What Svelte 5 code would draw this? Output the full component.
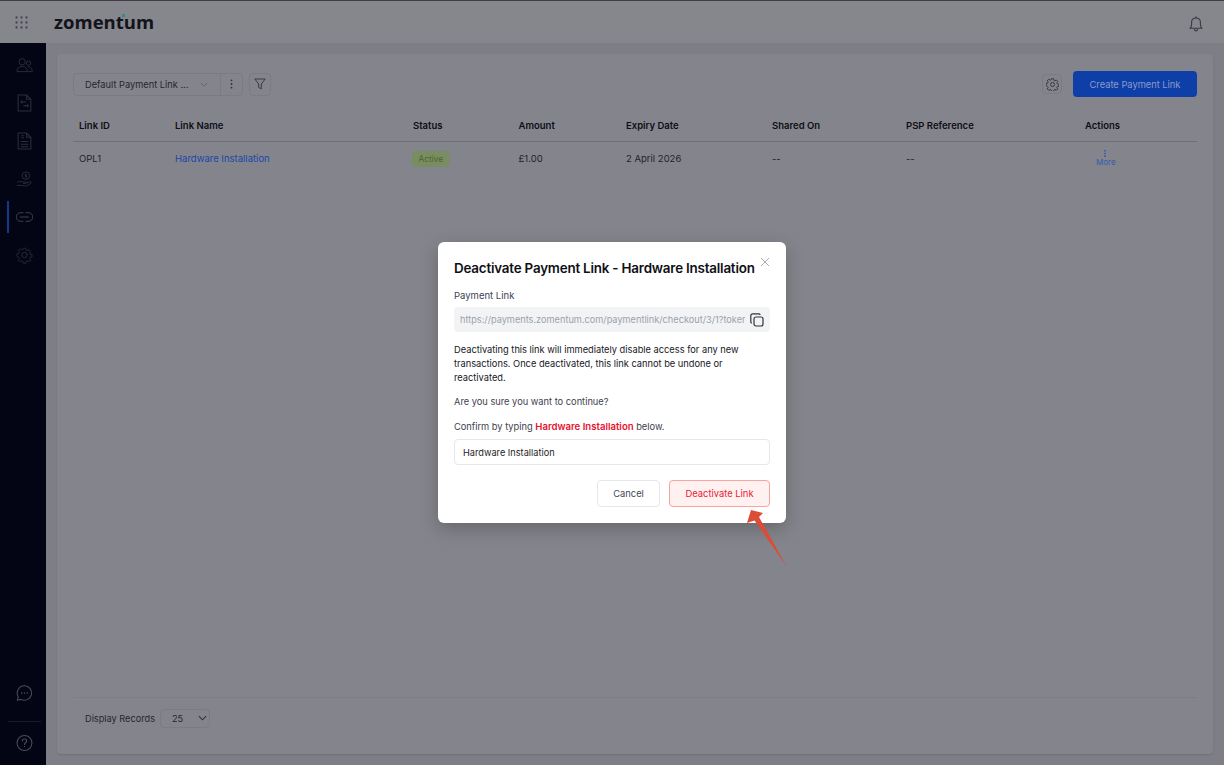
<script>
  const columns = [
    { label: 'Link ID', width: 96 },
    { label: 'Link Name', width: 238 },
    { label: 'Status', width: 105.5 },
    { label: 'Amount', width: 107.5 },
    { label: 'Expiry Date', width: 146 },
    { label: 'Shared On', width: 134 },
    { label: 'PSP Reference', width: 179 },
    { label: 'Actions', width: 105 }
  ];
</script>

<div class="page">
  <header class="topbar">
    <div class="brand">
      <svg class="apps" viewBox="0 0 13 13" width="13" height="13" aria-hidden="true">
        {#each [1.5, 6.5, 11.5] as y}
          {#each [1.5, 6.5, 11.5] as x}
            <circle cx={x} cy={y} r="1.15" fill="#45464e" />
          {/each}
        {/each}
      </svg>
      <span class="logo">zomentum<i class="accent"></i></span>
    </div>
    <svg class="bell" viewBox="0 0 14 16" width="14" height="16" fill="none" stroke="#393a42" stroke-width="1.1" aria-hidden="true">
      <path d="M1 12.2c1-1 1.6-1.9 1.6-3.7V6.3C2.600 3.800 4.500 2 7 2s4.400 1.800 4.400 4.300v2.200c0 1.800.6 2.700 1.600 3.700z" stroke-linejoin="round" />
      <path d="M5.500 13.400c.2 1 .8 1.500 1.500 1.500s1.300-.5 1.500-1.500M7 .7V2" stroke-linecap="round" />
    </svg>
  </header>

  <div class="body">
    <nav class="sidebar">
      <div class="nav-top">
        <svg class="nav-icon" viewBox="0 0 18 16" aria-hidden="true">
          <circle cx="6.500" cy="4.500" r="3.300" /><path d="M1 15c0-3.500 2-5.500 5.500-5.500S12 11.500 12 15z" />
          <circle cx="13.300" cy="6" r="2.300" /><path d="M12.500 10c2.800-.3 4.700 1.500 4.700 5h-5" />
        </svg>
        <svg class="nav-icon" viewBox="0 0 14 17" aria-hidden="true">
          <path d="M1 1h8l4 4v11H1zM9 1v4h4" /><path d="M3.500 7.500h5M3.500 7.500l1.500-1.200M3.500 7.500l1.500 1.200M6 11h5M11 11l-1.500-1.200M11 11l-1.500 1.200" />
        </svg>
        <svg class="nav-icon" viewBox="0 0 14 17" aria-hidden="true">
          <path d="M1 1h8l4 4v11H1zM9 1v4h4" /><path d="M3.500 9h7M3.500 11.500h7M3.500 14h7M4 3.500h2.500M4 5.500h2.500" />
        </svg>
        <svg class="nav-icon" viewBox="0 0 18 17" aria-hidden="true">
          <circle cx="10.500" cy="5" r="4" /><path d="M10.500 3v4M9.500 6.400c.6.500 2 .4 2-.4s-2-.6-2-1.400.9-.8 1.900-.4" />
          <path d="M1 12.500c2-1.800 4-1.800 6-.8h3c1.200 0 1.200 1.600 0 1.600H7.500M10 13l5-1.500c1.200-.3 1.800.8.800 1.500-2 1.500-4 2.800-6.300 2.800-3 0-5.500-1.300-8.500-.3" />
        </svg>
        <div class="nav-active">
          <svg class="nav-icon" viewBox="0 0 17 11" aria-hidden="true">
            <path d="M7 1.200H4.500a4.300 4.300 0 0 0 0 8.600H7M10 1.200h2.500a4.300 4.300 0 0 1 0 8.600H10M4.500 5.500h8" stroke-linecap="round" />
          </svg>
        </div>
        <svg class="nav-icon" viewBox="0 0 18 18" aria-hidden="true">
          <circle cx="9" cy="9" r="2.800" />
          <path d="M7.600 1h2.800l.4 2.200 1.500.7 1.900-1.200 2 2-1.200 1.900.7 1.500 2.200.4v2.800l-2.200.4-.7 1.500 1.200 1.900-2 2-1.900-1.200-1.500.7-.4 2.200H7.600l-.4-2.200-1.500-.7-1.900 1.200-2-2 1.200-1.900-.7-1.500L.1 10.400V7.600l2.200-.4.700-1.500L1.800 3.800l2-2 1.900 1.200 1.500-.7z" transform="translate(.9 .9) scale(.9)" />
        </svg>
      </div>
      <div class="nav-bottom">
        <svg class="nav-icon light" viewBox="0 0 16 16" aria-hidden="true">
          <path d="M8 1.200a6.800 6.800 0 1 1-3.300 12.800L1.300 14.800l.8-3.300A6.800 6.800 0 0 1 8 1.200z" stroke-linejoin="round" />
          <path d="M5.300 8h.1M8 8h.1M10.700 8h.1" stroke-linecap="round" stroke-width="1.400" />
        </svg>
        <span class="nav-rule"></span>
        <svg class="nav-icon light" viewBox="0 0 16 16" aria-hidden="true">
          <circle cx="8" cy="8" r="7" /><path d="M6 6.200c0-1.200.9-1.900 2-1.900s2 .7 2 1.800c0 1.700-2 1.600-2 3.200M8 11.300v.3" stroke-linecap="round" />
        </svg>
      </div>
    </nav>

    <main class="content">
      <section class="card">
        <div class="toolbar">
          <div class="view-group">
            <div class="view-select">
              <span>Default Payment Link ...</span>
              <svg viewBox="0 0 10 6" width="8" height="5" fill="none" stroke="#5f6068" aria-hidden="true"><path d="M1 1l4 4 4-4" /></svg>
            </div>
            <div class="view-more">
              <svg viewBox="0 0 3 11" width="3" height="10" fill="#2f3038" aria-hidden="true"><circle cx="1.500" cy="1.500" r="1" /><circle cx="1.500" cy="5.500" r="1" /><circle cx="1.500" cy="9.500" r="1" /></svg>
            </div>
          </div>
          <button class="filter" aria-label="Filter">
            <svg viewBox="0 0 12 12" width="12" height="12" fill="none" stroke="#393a42" stroke-linejoin="round" aria-hidden="true"><path d="M.8 1h10.400L7.300 6v4.800L4.700 9.400V6z" /></svg>
          </button>
          <div class="spacer"></div>
          <button class="settings" aria-label="Settings">
            <svg viewBox="0 0 18 18" width="13" height="13" fill="none" stroke="#34353c" stroke-width="1.300" aria-hidden="true">
              <circle cx="9" cy="9" r="2.800" />
              <path d="M7.600 1h2.800l.4 2.200 1.500.7 1.900-1.200 2 2-1.200 1.900.7 1.500 2.200.4v2.800l-2.200.4-.7 1.500 1.200 1.900-2 2-1.900-1.200-1.500.7-.4 2.200H7.600l-.4-2.200-1.500-.7-1.900 1.200-2-2 1.200-1.900-.7-1.500L.1 10.400V7.600l2.200-.4.700-1.500L1.800 3.800l2-2 1.900 1.200 1.500-.7z" />
            </svg>
          </button>
          <button class="create">Create Payment Link</button>
        </div>

        <div class="table">
          <div class="thead">
            {#each columns as col}
              <div class="th" style="width: {col.width}px">{col.label}</div>
            {/each}
          </div>
          <div class="tr">
            <div class="td" style="width: {columns[0].width}px">OPL1</div>
            <div class="td link" style="width: {columns[1].width}px">Hardware Installation</div>
            <div class="td" style="width: {columns[2].width}px"><span class="badge">Active</span></div>
            <div class="td" style="width: {columns[3].width}px">£1.00</div>
            <div class="td" style="width: {columns[4].width}px">2 April 2026</div>
            <div class="td" style="width: {columns[5].width}px">--</div>
            <div class="td" style="width: {columns[6].width}px">--</div>
            <div class="td more" style="width: {columns[7].width}px">
              <svg viewBox="0 0 3 11" width="2" height="9" fill="#1c4fae" aria-hidden="true"><circle cx="1.500" cy="1.500" r="1.200" /><circle cx="1.500" cy="5.500" r="1.200" /><circle cx="1.500" cy="9.500" r="1.200" /></svg>
              <span>More</span>
            </div>
          </div>
        </div>

        <footer class="pager">
          <span>Display Records</span>
          <div class="page-size">
            <span>25</span>
            <svg viewBox="0 0 10 6" width="9" height="6" fill="none" stroke="#2f3038" stroke-width="1.200" aria-hidden="true"><path d="M1 1l4 4 4-4" /></svg>
          </div>
        </footer>
      </section>
    </main>
  </div>

  <div class="dialog" role="dialog">
    <svg class="close" viewBox="0 0 10 10" width="10" height="10" fill="none" stroke="#a9abb1" aria-hidden="true"><path d="M1 1l8 8M9 1l-8 8" /></svg>
    <h2>Deactivate Payment Link - Hardware Installation</h2>
    <div class="field-label">Payment Link</div>
    <div class="url-field">
      <span class="url">https://payments.zomentum.com/paymentlink/checkout/3/1?token=a8f2c1</span>
      <svg viewBox="0 0 14 14" width="14" height="14" fill="none" stroke="#33343c" stroke-width="1.200" aria-hidden="true">
        <rect x="4" y="4" width="9" height="9" rx="2" />
        <path d="M10 1.500c-.2-.4-.6-.7-1-.7H2.800c-1.100 0-2 .9-2 2V9c0 .5.300.9.700 1" stroke-linecap="round" />
      </svg>
    </div>
    <p class="warning">Deactivating this link will immediately disable access for any new transactions. Once deactivated, this link cannot be undone or reactivated.</p>
    <p class="ask">Are you sure you want to continue?</p>
    <p class="confirm">Confirm by typing <strong>Hardware Installation</strong> below.</p>
    <div class="input">Hardware Installation</div>
    <div class="actions">
      <button class="cancel">Cancel</button>
      <button class="deactivate">Deactivate Link</button>
    </div>
  </div>

  <svg class="arrow" viewBox="0 0 50 62" width="50" height="62" aria-hidden="true">
    <path d="M6 0L18 3 14 7 42 57 9.500 10.500 2 13z" fill="#dc4c36" />
  </svg>
</div>

<style>
  :global(body) {
    margin: 0;
    background: #7e7f86;
  }

  .page {
    position: relative;
    width: 1224px;
    height: 765px;
    display: flex;
    flex-direction: column;
    overflow: hidden;
    font-family: Inter, "Liberation Sans", sans-serif;
    color: #2b2c33;
    font-size: 9.500px;
    -webkit-font-smoothing: antialiased;
  }

  .topbar {
    height: 43px;
    flex: none;
    box-sizing: border-box;
    border-top: 1px solid #3e3f44;
    background: #86868d;
    display: flex;
    align-items: center;
    justify-content: space-between;
    padding: 0 21px 0 15px;
  }

  .bell {
    margin-top: 4px;
  }

  .brand {
    display: flex;
    align-items: center;
    gap: 26px;
  }

  .logo {
    position: relative;
    font-family: "Open Sans", sans-serif;
    font-size: 18.500px;
    font-weight: 700;
    line-height: 20px;
    color: #13131c;
  }

  .accent {
    position: absolute;
    left: 68px;
    top: 2px;
    width: 3px;
    height: 3px;
    background: #2f8f83;
  }

  .body {
    flex: 1;
    display: flex;
    min-height: 0;
  }

  .sidebar {
    width: 46px;
    flex: none;
    background: #030414;
    display: flex;
    flex-direction: column;
    justify-content: space-between;
    padding: 13px 0 13px;
    box-sizing: border-box;
  }

  .nav-top,
  .nav-bottom {
    display: flex;
    flex-direction: column;
    align-items: center;
    padding-left: 3px;
  }

  .nav-top {
    gap: 20px;
    position: relative;
  }

  .nav-icon {
    width: 17px;
    height: 18px;
    fill: none;
    stroke: #2c2d3c;
    stroke-width: 1;
    flex: none;
  }

  .nav-icon.light {
    stroke: #4b4c58;
  }

  .nav-active {
    align-self: stretch;
    height: 18px;
    display: flex;
    justify-content: center;
    position: relative;
  }

  .nav-active::before {
    content: "";
    position: absolute;
    left: 4px;
    top: -7px;
    width: 2px;
    height: 32px;
    background: #13398f;
  }

  .nav-active .nav-icon {
    stroke: #3f4050;
  }

  .nav-rule {
    width: 33px;
    height: 1px;
    background: #1a1b29;
    margin: 19px 0 12px;
  }

  .content {
    flex: 1;
    min-width: 0;
    padding: 11px;
    background: #7e7f86;
  }

  .card {
    height: 100%;
    box-sizing: border-box;
    background: #84858c;
    border-radius: 4px;
    box-shadow: 0 1px 2px rgba(0, 0, 0, 0.12);
    padding: 18px 16px 0;
    display: flex;
    flex-direction: column;
  }

  .toolbar {
    display: flex;
    align-items: center;
    height: 24px;
    gap: 6px;
  }

  .view-group {
    display: flex;
    height: 21px;
    border: 1px solid #7b7c83;
    border-radius: 4px;
  }

  .view-select {
    width: 147px;
    display: flex;
    align-items: center;
    justify-content: space-between;
    padding: 0 12px 0 11px;
    box-sizing: border-box;
    border-right: 1px solid #7b7c83;
    color: #25262d;
    font-size: 9.250px;
  }

  .view-more {
    width: 21px;
    display: flex;
    align-items: center;
    justify-content: center;
  }

  button {
    font: inherit;
    padding: 0;
    background: none;
    border: none;
  }

  .filter,
  .settings {
    width: 22px;
    height: 21px;
    display: flex;
    align-items: center;
    justify-content: center;
    border: 1px solid #7b7c83;
    border-radius: 4px;
    box-sizing: border-box;
  }

  .filter {
    box-sizing: content-box;
    width: 20px;
  }

  .settings {
    width: 20px;
    height: 20px;
    margin-right: 5px;
  }

  .spacer {
    flex: 1;
  }

  .create {
    width: 124px;
    height: 26px;
    background: #0e3fa8;
    color: #8a9cc6;
    border-radius: 4px;
    font-size: 9.300px;
  }

  .table {
    margin-top: 15px;
    flex: 1;
  }

  .thead {
    display: flex;
    height: 31px;
    align-items: center;
    padding-left: 6px;
    padding-bottom: 2px;
    border-bottom: 1px solid #6e6f76;
    box-sizing: border-box;
  }

  .th {
    flex: none;
    font-weight: 600;
    font-size: 9.500px;
    color: #0e0f16;
  }

  .tr {
    display: flex;
    align-items: center;
    padding-left: 6px;
    height: 33px;
  }

  .td {
    flex: none;
    font-size: 9.500px;
    color: #22232a;
  }

  .link {
    color: #1b46a8;
  }

  .badge {
    display: inline-block;
    margin-left: -1.500px;
    background: #7a8c64;
    color: #4a6a1f;
    border-radius: 4px;
    padding: 3px 7px;
    font-size: 8.300px;
    line-height: 10px;
  }

  .more {
    display: flex;
    flex-direction: column;
    align-items: flex-start;
    padding-left: 11px;
    box-sizing: border-box;
    color: #2f5cae;
    font-size: 8px;
    line-height: 8px;
  }

  .more svg {
    margin-left: 8px;
    margin-top: -3px;
  }

  .pager {
    height: 57px;
    box-sizing: border-box;
    border-top: 1px solid #7d7e85;
    display: flex;
    align-items: center;
    gap: 5px;
    padding: 0 12px 16px;
    color: #25262d;
    font-size: 9.200px;
  }

  .page-size {
    width: 50px;
    height: 19px;
    border: 1px solid #7b7c83;
    border-radius: 4px;
    box-sizing: border-box;
    display: flex;
    align-items: center;
    justify-content: space-between;
    padding: 0 2px 0 11px;
  }

  .dialog {
    position: absolute;
    left: 438px;
    top: 242px;
    width: 348px;
    height: 281px;
    box-sizing: border-box;
    padding: 16px 16px 0;
    background: #fff;
    border-radius: 6px;
    box-shadow: 0 6px 18px rgba(0, 0, 0, 0.22);
    color: #1d1e25;
  }

  .close {
    position: absolute;
    right: 16px;
    top: 15px;
  }

  h2 {
    margin: 0;
    font-size: 13.400px;
    line-height: 20px;
    font-weight: 600;
    letter-spacing: -0.200px;
    white-space: nowrap;
    color: #0f1015;
  }

  .field-label {
    margin-top: 11px;
    font-size: 9.500px;
    line-height: 14px;
    color: #3a4254;
  }

  .url-field {
    margin-top: 4px;
    height: 25px;
    background: #f2f3f5;
    border-radius: 4px;
    display: flex;
    align-items: center;
    padding: 0 6px;
    gap: 5px;
  }

  .url {
    width: 285px;
    overflow: hidden;
    white-space: nowrap;
    color: #9ca1ab;
    font-size: 9.200px;
  }

  p {
    margin: 0;
    font-size: 9.270px;
    line-height: 14px;
  }

  .warning {
    margin-top: 11px;
    color: #16171e;
  }

  .ask {
    margin-top: 10px;
    color: #40434f;
  }

  .confirm {
    margin-top: 11px;
    color: #40434f;
  }

  strong {
    color: #e8112d;
    font-weight: 600;
    font-size: 9.600px;
  }

  .input {
    margin-top: 5px;
    height: 26px;
    box-sizing: border-box;
    border: 1px solid #e6e7ea;
    border-radius: 4px;
    display: flex;
    align-items: center;
    padding: 0 8px;
    color: #1d1e25;
    font-size: 9.200px;
  }

  .actions {
    margin-top: 15px;
    display: flex;
    justify-content: flex-end;
    gap: 9px;
  }

  .actions button {
    height: 27px;
    border-radius: 4px;
    font-size: 9.400px;
    box-sizing: border-box;
  }

  .cancel {
    width: 63px;
    border: 1px solid #e6e7ea;
    color: #454855;
  }

  .deactivate {
    width: 101px;
    background: #fef1f0;
    border: 1px solid #f9a3a0;
    color: #e8213b;
  }

  .arrow {
    position: absolute;
    left: 745px;
    top: 510px;
  }
</style>
